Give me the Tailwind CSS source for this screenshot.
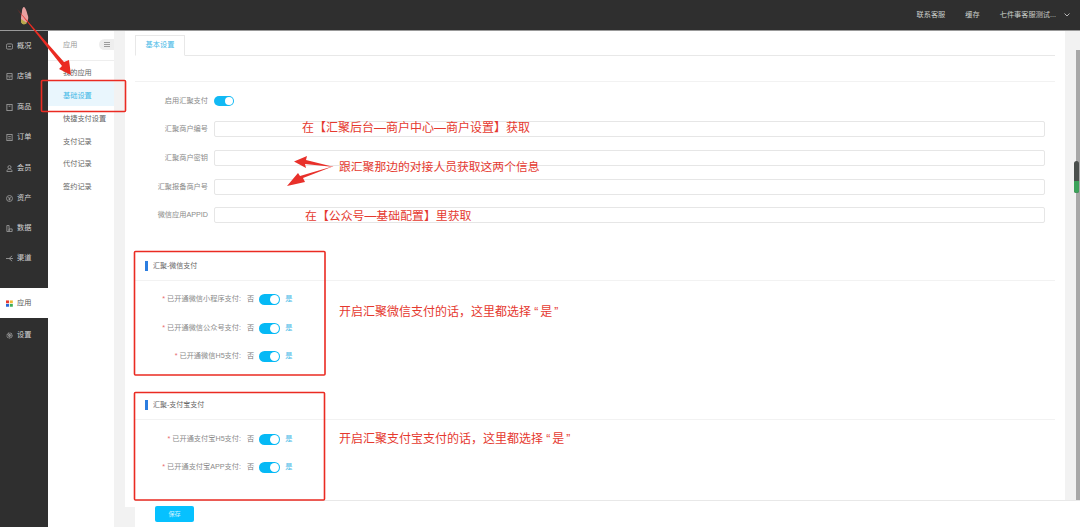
<!DOCTYPE html>
<html lang="zh">
<head>
<meta charset="utf-8">
<title>基础设置</title>
<script src="https://cdn.jsdelivr.net/npm/@tailwindcss/browser@4"></script>
</head>
<body class="w-[1080px] h-[527px] overflow-hidden relative bg-white font-['Liberation_Sans','Noto_Sans_CJK_SC',sans-serif]">

<!-- 顶栏 -->
<header class="h-[31px] bg-[#2f2f2f] border-b border-[#999] flex items-center justify-end text-[7.2px] text-[#c9cdc9]">
    <span class="mr-[20px] mt-[1px]">联系客服</span>
    <span class="mr-[20px]">缓存</span>
    <span class="mr-[8px] mt-[1px]">七件事客服测试...</span>
    <svg class="mr-[10px] w-[6px] h-[4px]" viewBox="0 0 6 4" fill="none" stroke="#b5b5b5"><path d="M0.5 0.5 3 3 5.5 0.5"/></svg>
</header>

<div class="flex h-[496px]">
    <!-- 主导航 -->
    <nav class="w-[48px] bg-[#2f2f2f] pt-px text-[7.2px] text-[#d4d4d4] shrink-0">
        <div class="h-[29px] flex items-center pl-[6px] gap-[4px]">
            <svg class="w-[7px] h-[7px]" viewBox="0 0 8 8" fill="none" stroke="#9a9a9a"><rect x="0.5" y="1" width="7" height="6" rx="1.5"/><path d="M2.5 4h3"/></svg>概况
        </div>
        <div class="h-[31px] flex items-center pl-[6px] gap-[4px]">
            <svg class="w-[7px] h-[7px]" viewBox="0 0 8 8" fill="none" stroke="#9a9a9a"><path d="M1 .5h6v3H1zM1 3.5v4h6v-4M3 5.5h2"/></svg>店铺
        </div>
        <div class="h-[30px] flex items-center pl-[6px] gap-[4px]">
            <svg class="w-[7px] h-[7px]" viewBox="0 0 8 8" fill="none" stroke="#9a9a9a"><rect x="1" y="0.5" width="6" height="7"/><path d="M3 2.5h2"/></svg>商品
        </div>
        <div class="h-[31px] flex items-center pl-[6px] gap-[4px]">
            <svg class="w-[7px] h-[7px]" viewBox="0 0 8 8" fill="none" stroke="#9a9a9a"><rect x="1" y="0.5" width="6" height="7"/><path d="M2.5 5.5h3M2.5 3h3"/></svg>订单
        </div>
        <div class="h-[30px] flex items-center pl-[6px] gap-[4px]">
            <svg class="w-[7px] h-[7px]" viewBox="0 0 8 8" fill="none" stroke="#9a9a9a"><circle cx="4" cy="2.5" r="1.8"/><path d="M1 7.5c0-4 6-4 6 0z"/></svg>会员
        </div>
        <div class="h-[31px] flex items-center pl-[6px] gap-[4px]">
            <svg class="w-[7px] h-[7px]" viewBox="0 0 8 8" fill="none" stroke="#9a9a9a"><circle cx="4" cy="4" r="3.4"/><path d="M2.8 2.4 4 4l1.2-1.6M2.6 4.6h2.8M4 4v2.2"/></svg>资产
        </div>
        <div class="h-[29px] flex items-center pl-[6px] gap-[4px]">
            <svg class="w-[7px] h-[7px]" viewBox="0 0 8 8" fill="none" stroke="#9a9a9a"><path d="M1 .5h2.5v7H1zM3.5 4.5H7v3H3.5z"/></svg>数据
        </div>
        <div class="h-[31px] flex items-center pl-[6px] gap-[4px]">
            <svg class="w-[7px] h-[7px]" viewBox="0 0 8 8" fill="none" stroke="#9a9a9a"><path d="M0 4h3.5L7 1M3.5 4 7 7M3.5 4H8"/></svg>渠道
        </div>
        <div class="h-[30px] mt-[14px] pt-px flex items-center pl-[6px] gap-[4px] bg-white text-[#555]">
            <svg class="w-[7px] h-[7px]" viewBox="0 0 8 8"><rect x="0" y="0.5" width="3.4" height="3.2" fill="#e8392f"/><rect x="4.4" y="0.5" width="3.4" height="3.2" fill="#f2b632"/><rect x="0" y="4.5" width="3.4" height="3.2" fill="#2b67d8"/><rect x="4.4" y="4.5" width="3.4" height="3.2" fill="#3fae5a"/></svg>应用
        </div>
        <div class="h-[31px] pt-[3px] flex items-center pl-[6px] gap-[4px]">
            <svg class="w-[7px] h-[7px]" viewBox="0 0 8 8" fill="none" stroke="#9a9a9a" stroke-width="1.2"><circle cx="4" cy="4" r="2.9" stroke-dasharray="1.4 .5"/><circle cx="4" cy="4" r="1"/></svg>设置
        </div>
    </nav>

    <!-- 二级导航 -->
    <aside class="w-[66px] shrink-0 bg-white text-[7.2px] text-[#666]">
        <div class="h-[30px] relative flex items-center pl-[15px] text-[#999] border-b border-[#eee]">
            应用
            <span class="absolute right-0 top-[8px] w-[15px] h-[11px] rounded-l-full bg-[#eeeeee] flex items-center justify-center">
                <svg class="w-[6px] h-[5px]" viewBox="0 0 6 5" stroke="#888" stroke-width=".8"><path d="M0 .5h6M0 2.5h6M0 4.5h6"/></svg>
            </span>
        </div>
        <div class="h-[20px] pt-[4px] flex items-center pl-[15px]">我的应用</div>
        <div class="h-[25px] pt-[5px] flex items-center pl-[15px] bg-[#e9f6fd] text-[#3fb8e6]">基础设置</div>
        <div class="h-[23px] pt-[3px] flex items-center pl-[15px]">快捷支付设置</div>
        <div class="h-[23px] pt-[3px] flex items-center pl-[15px]">支付记录</div>
        <div class="h-[23px] pt-[1px] flex items-center pl-[15px]">代付记录</div>
        <div class="h-[23px] pt-[1px] flex items-center pl-[15px]">签约记录</div>
    </aside>

    <!-- 内容区 -->
    <main class="flex-1 bg-[#f2f2f2] flex relative">
        <div class="w-[940px] h-[476px] ml-[11px] bg-white pl-[10px] pr-[10px] text-[7.2px] text-[#8a8a8a]">
            <div class="h-[25px] border-b border-[#e8e8e8] flex items-end">
                <div class="w-[50px] h-[21px] -mb-px border border-[#e8e8e8] border-b-white bg-white flex items-center justify-center text-[#3fb8e6]">基本设置</div>
            </div>
            <div class="h-[26px] border-b border-[#f2f2f2]"></div>

            <div class="flex items-center h-[10px] mt-[14px]">
                <label class="w-[73px] text-right">启用汇聚支付</label>
                <span class="ml-[6px] w-[20px] h-[10px] rounded-full bg-[#12b9f4] flex justify-end items-center pr-px"><i class="w-[8px] h-[8px] rounded-full bg-white"></i></span>
            </div>
            <div class="flex items-center h-[16px] mt-[15px] mr-[10px]">
                <label class="w-[73px] text-right">汇聚商户编号</label>
                <span class="ml-[6px] flex-1 h-[16px] border border-[#e6e6e6] rounded-[2px]"></span>
            </div>
            <div class="flex items-center h-[16px] mt-[13px] mr-[10px]">
                <label class="w-[73px] text-right">汇聚商户密钥</label>
                <span class="ml-[6px] flex-1 h-[16px] border border-[#e6e6e6] rounded-[2px]"></span>
            </div>
            <div class="flex items-center h-[16px] mt-[13px] mr-[10px]">
                <label class="w-[73px] text-right">汇聚报备商户号</label>
                <span class="ml-[6px] flex-1 h-[16px] border border-[#e6e6e6] rounded-[2px]"></span>
            </div>
            <div class="flex items-center h-[16px] mt-[12px] mr-[10px]">
                <label class="w-[73px] text-right">微信应用APPID</label>
                <span class="ml-[6px] flex-1 h-[16px] border border-[#e6e6e6] rounded-[2px]"></span>
            </div>

            <!-- 微信支付 -->
            <div class="mt-[29px] h-[29px] border-b border-[#f2f2f2] flex items-center text-[7px] text-[#666]">
                <i class="ml-[10px] w-[3px] h-[10px] bg-[#2b7de0] mr-[5px]"></i><span class="mt-px">汇聚-微信支付</span>
            </div>
            <div class="flex items-center h-[11px] mt-[13px]">
                <label class="w-[106px] text-right"><b class="font-normal text-[#e86a6a]">*</b> 已开通微信小程序支付:</label>
                <span class="ml-[6px] text-[#777]">否</span>
                <span class="ml-[5px] w-[21px] h-[11px] rounded-full bg-[#06b9f5] flex justify-end items-center pr-px"><i class="w-[9px] h-[9px] rounded-full bg-white"></i></span>
                <span class="ml-[5px] text-[#3fb8e6]">是</span>
            </div>
            <div class="flex items-center h-[11px] mt-[18px]">
                <label class="w-[106px] text-right"><b class="font-normal text-[#e86a6a]">*</b> 已开通微信公众号支付:</label>
                <span class="ml-[6px] text-[#777]">否</span>
                <span class="ml-[5px] w-[21px] h-[11px] rounded-full bg-[#06b9f5] flex justify-end items-center pr-px"><i class="w-[9px] h-[9px] rounded-full bg-white"></i></span>
                <span class="ml-[5px] text-[#3fb8e6]">是</span>
            </div>
            <div class="flex items-center h-[11px] mt-[17px]">
                <label class="w-[106px] text-right"><b class="font-normal text-[#e86a6a]">*</b> 已开通微信H5支付:</label>
                <span class="ml-[6px] text-[#777]">否</span>
                <span class="ml-[5px] w-[21px] h-[11px] rounded-full bg-[#06b9f5] flex justify-end items-center pr-px"><i class="w-[9px] h-[9px] rounded-full bg-white"></i></span>
                <span class="ml-[5px] text-[#3fb8e6]">是</span>
            </div>

            <!-- 支付宝支付 -->
            <div class="mt-[29px] h-[29px] border-b border-[#f2f2f2] flex items-center text-[7px] text-[#666]">
                <i class="ml-[10px] w-[3px] h-[10px] bg-[#2b7de0] mr-[5px]"></i><span class="mt-px">汇聚-支付宝支付</span>
            </div>
            <div class="flex items-center h-[11px] mt-[14px]">
                <label class="w-[106px] text-right"><b class="font-normal text-[#e86a6a]">*</b> 已开通支付宝H5支付:</label>
                <span class="ml-[6px] text-[#777]">否</span>
                <span class="ml-[5px] w-[21px] h-[11px] rounded-full bg-[#06b9f5] flex justify-end items-center pr-px"><i class="w-[9px] h-[9px] rounded-full bg-white"></i></span>
                <span class="ml-[5px] text-[#3fb8e6]">是</span>
            </div>
            <div class="flex items-center h-[11px] mt-[17px]">
                <label class="w-[106px] text-right"><b class="font-normal text-[#e86a6a]">*</b> 已开通支付宝APP支付:</label>
                <span class="ml-[6px] text-[#777]">否</span>
                <span class="ml-[5px] w-[21px] h-[11px] rounded-full bg-[#06b9f5] flex justify-end items-center pr-px"><i class="w-[9px] h-[9px] rounded-full bg-white"></i></span>
                <span class="ml-[5px] text-[#3fb8e6]">是</span>
            </div>
        </div>
        <div class="absolute right-0 top-[19px] bottom-0 w-[4px] bg-[#a8a8a8]"></div>
    </main>
</div>

<!-- 底部保存栏 -->
<div class="absolute left-[135px] right-0 top-[500px] h-[27px] bg-white border-t border-[#e8e8e8] pl-[20px] pt-[5px]">
    <button class="block w-[39px] h-[16px] rounded-[2px] bg-[#06c1ff] text-white/80 text-[6px]">保存</button>
</div>

<!-- 滚动条上的浮标 -->
<div class="absolute left-[1074px] top-[161px] w-[5px] h-[32px] rounded-full bg-[#4a4f4c] overflow-hidden flex items-end"><i class="w-full h-[12px] bg-[#3ca35a]"></i></div>

<!-- 红色标注 -->
<svg class="absolute inset-0 w-[1080px] h-[527px] pointer-events-none" viewBox="0 0 1080 527" fill="none">
    <!-- 顶部小图标 -->
    <path d="M24 7c2 1 3 6 4 9 1 3-1 8-4 8-3 0-3-3-3-6 0-3 1-5 1-7 0-2 1-4 2-4Z" fill="#e9a0a0"/>
    <path d="M21 19c2 1 4 3 6 4-2 2-5 2-6-1Z" fill="#b9a94a"/>
    <rect x="41.5" y="80.5" width="84" height="31" rx="1" stroke="#ea2b22" stroke-width="1.6"/>
    <rect x="134.5" y="251.5" width="190.5" height="123.5" rx="1" stroke="#ea2b22" stroke-width="1.6"/>
    <rect x="134.5" y="392.5" width="190" height="107.5" rx="1" stroke="#ea2b22" stroke-width="1.6"/>
    <path d="M17 9 64 62 69 60 71 75 59 69 62 66Z" fill="#ea2b22"/>
    <path d="M334 167 305 164 306 168 294 161.5 307 156 306 160Z" fill="#e8302a"/>
    <path d="M334 166 303 178 305 182 287 186 298 173 300 176Z" fill="#e8302a"/>
</svg>
<p class="absolute left-[302px] top-[120px] text-[12px] leading-[16px] text-[#e5392f]">在【汇聚后台—商户中心—商户设置】获取</p>
<p class="absolute left-[339px] top-[159px] text-[11.8px] leading-[16px] text-[#e5392f]">跟汇聚那边的对接人员获取这两个信息</p>
<p class="absolute left-[305px] top-[208px] text-[11.9px] leading-[16px] text-[#e5392f]">在【公众号—基础配置】里获取</p>
<p class="absolute left-[339px] top-[304px] text-[12px] leading-[16px] text-[#e5392f]">开启汇聚微信支付的话，这里都选择 <span class="tracking-[2px]">“是”</span></p>
<p class="absolute left-[339px] top-[431px] text-[12px] leading-[16px] text-[#e5392f]">开启汇聚支付宝支付的话，这里都选择 <span class="tracking-[2px]">“是”</span></p>
</body>
</html>
